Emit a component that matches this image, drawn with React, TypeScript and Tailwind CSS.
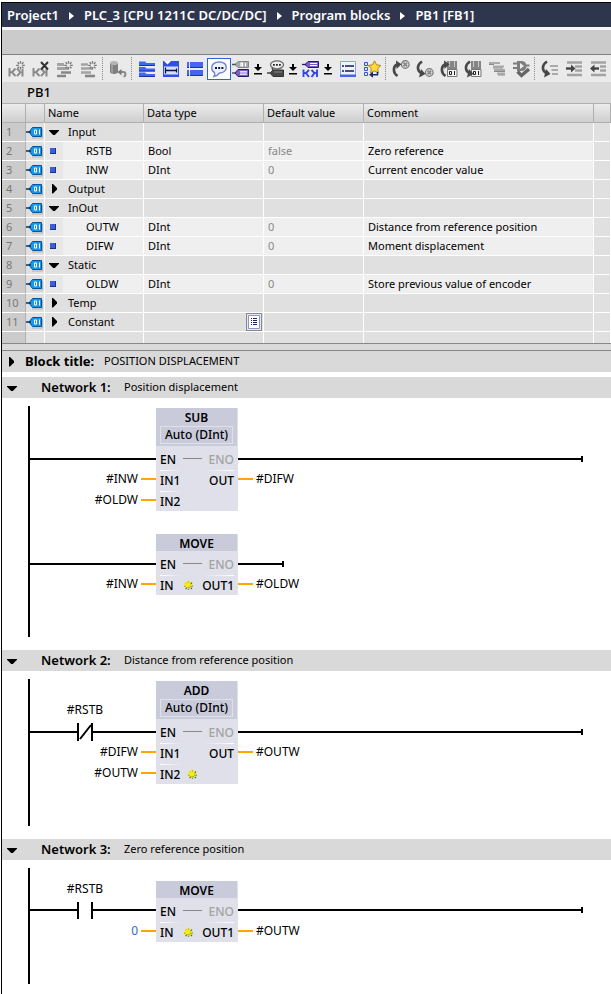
import type { ReactNode } from 'react'

// Block editor: breadcrumb, toolbar, interface table and the ladder networks.

type Row = {
  name: string
  kind: 'open' | 'closed' | 'variable'
  type?: string
  value?: string
  comment?: string
}

const ROWS: Row[] = [
  { name: 'Input', kind: 'open' },
  { name: 'RSTB', kind: 'variable', type: 'Bool', value: 'false', comment: 'Zero reference' },
  { name: 'INW', kind: 'variable', type: 'DInt', value: '0', comment: 'Current encoder value' },
  { name: 'Output', kind: 'closed' },
  { name: 'InOut', kind: 'open' },
  { name: 'OUTW', kind: 'variable', type: 'DInt', value: '0', comment: 'Distance from reference position' },
  { name: 'DIFW', kind: 'variable', type: 'DInt', value: '0', comment: 'Moment displacement' },
  { name: 'Static', kind: 'open' },
  { name: 'OLDW', kind: 'variable', type: 'DInt', value: '0', comment: 'Store previous value of encoder' },
  { name: 'Temp', kind: 'closed' },
  { name: 'Constant', kind: 'closed' },
]

const COLUMNS = ['', '', 'Name', 'Data type', 'Default value', 'Comment', '']

/* ---------- Icons ---------- */

function Icon({ children }: { children: ReactNode }) {
  return (
    <svg className="w-[18px] h-[18px] shrink-0" viewBox="0 0 18 18" fill="none" aria-hidden="true">
      {children}
    </svg>
  )
}

function Spark() {
  return (
    <g stroke="#777" strokeWidth="1.3">
      <path d="M12.5 1v2.6M12.5 7v2.6M8.2 5.3h2.6M14.2 5.3h2.6M9.5 2.3l1.7 1.7M15.5 2.3l-1.7 1.7M9.5 8.3l1.7-1.7M15.5 8.3l-1.7-1.7" />
    </g>
  )
}

function Contacts() {
  return <path d="M1.500 8v8.500M1.500 12.200h2.500M7.500 8.500L4 12.200l3.500 4M9 8.500l3.500 3.700L9 16.200M14.500 9v7.500" stroke="#8a8a8a" strokeWidth="2" />
}

const NetworkInsert = () => (
  <Icon>
    <Contacts />
    <Spark />
  </Icon>
)

const NetworkDelete = () => (
  <Icon>
    <Contacts />
    <path d="M9 2l7 7.5M16 2L9 9.5" stroke="#333" strokeWidth="2" />
  </Icon>
)

const RowInsert = () => (
  <Icon>
    <path d="M1 4.5h7M1 8.5h11" stroke="#a3a3a3" strokeWidth="3" />
    <path d="M5 12.5h10M1 16h9" stroke="#868686" strokeWidth="2.6" />
    <Spark />
  </Icon>
)

const RowAdd = () => (
  <Icon>
    <path d="M1 4.5h7M1 8.5h11M1 12.500h10" stroke="#a3a3a3" strokeWidth="2.6" />
    <path d="M5 16h10" stroke="#868686" strokeWidth="2.6" />
    <Spark />
  </Icon>
)

const ResetValues = () => (
  <Icon>
    <path d="M1 3v9c0 2.500 8 2.500 8 0V3z" fill="#808080" />
    <path d="M2 3h2v10H2z" fill="#9c9c9c" />
    <ellipse cx="5" cy="3" rx="4" ry="2" fill="#b5b5b5" />
    <path d="M11 12h3.500c2.500 0 2.500 4.500 0 4.500" stroke="#8a8a8a" strokeWidth="2" />
    <path d="M12.500 9v6.500L8.500 12z" fill="#777" />
  </Icon>
)

const OpenNetworks = () => (
  <Icon>
    <path d="M1 1.500h6L8.500 3H17v3H1zM1 7h6l1.500 1.500H17v3H1zM1 12.500h6L8.500 14H17v3H1z" fill="#3f68f0" />
    <path d="M1 5.500h16M1 11h16M1 16.500h16" stroke="#1e2fae" />
  </Icon>
)

const CloseNetworks = () => (
  <Icon>
    <path d="M1 1h16v16H1z" fill="#2f4fe0" />
    <path d="M2 6.500h14v8H2z" fill="#d5defb" />
    <path d="M2 1h7L5.500 4.500z" fill="#fff" />
    <path d="M3.500 7.500v6M14.500 8.500v4M3.500 10.500h11" stroke="#0d1240" strokeWidth="1.300" />
  </Icon>
)

const FreeComments = () => (
  <Icon>
    <path d="M1 2h16v6H1zM1 10h16v6H1z" fill="#4267ee" />
    <path d="M1 7.500h16M1 15.500h16" stroke="#1d30ad" />
    <path d="M3.500 2v14" stroke="#e6ebff" />
    <path d="M4 9h13" stroke="#e6ebff" strokeWidth="2" />
  </Icon>
)

const CommentBubble = () => (
  <Icon>
    <path d="M9 2c4.800 0 7.300 2 7.300 5.500S13 13 9.500 13c-1.500 2-3 3-5.500 3.500 1-1.500 1-2.500.500-4C2.500 11.500 1.700 10 1.700 7.700 1.700 4.500 4.500 2 9 2z" fill="#eef2ff" stroke="#7187cf" strokeWidth="1.400" />
    <path d="M5 7h2v2H5zM8.200 7h2v2h-2zM11.400 7h2v2h-2z" fill="#10164d" />
  </Icon>
)

const OperandTags = () => (
  <Icon>
    <path d="M6 1.500h10.500v6H6L3 4.500z" fill="#a8a8a8" stroke="#858585" />
    <path d="M9 3h1.500v3H9zM13.500 3v3.500" stroke="#fff" strokeWidth="1.200" />
    <path d="M0 4.500h4M0 13h4" stroke="#555" strokeWidth="1.300" />
    <path d="M6 9.500h10.500v7H6L3 13z" fill="#7d5cc4" stroke="#281a63" />
    <path d="M8 11.800h7M8 14.200h7" stroke="#fff" strokeWidth="1.200" />
  </Icon>
)

const OperandComment = () => (
  <Icon>
    <ellipse cx="10" cy="4.800" rx="6.500" ry="4" fill="#eee" stroke="#6b6b6b" strokeWidth="1.300" />
    <path d="M6 4h1.800v1.800H6zM9 4h1.800v1.800H9zM12 4h1.800v1.800H12z" fill="#222" />
    <path d="M6 10h10.500v6.500H6L3 13z" fill="#484848" stroke="#333" />
    <path d="M0 13h4M5 8l1 2.500" stroke="#444" strokeWidth="1.400" />
    <path d="M7 12h8" stroke="#888" />
  </Icon>
)

const OperandSwitch = () => (
  <Icon>
    <path d="M6 1.500h10.500v6H6L3 4.500z" fill="#7d5cc4" stroke="#281a63" />
    <path d="M8 3.500h7M8 5.500h7" stroke="#fff" />
    <path d="M0 4.500h4" stroke="#281a63" strokeWidth="1.300" />
    <path d="M1.500 9.500v7.500M1.500 13h2M7 10l-3 3 3 4M9.500 10l3 3-3 4M15 9.500v7.500M12 13h3" stroke="#3345e5" strokeWidth="1.900" />
  </Icon>
)

const NetworkView = () => (
  <Icon>
    <path d="M1.5 1.5h15v15h-15z" fill="#eff3ff" stroke="#8ea2e6" />
    <path d="M1 14.500h16V17H1z" fill="#4467dd" />
    <path d="M3 6h2M6 6h9M3 11h2M6 11h9" stroke="#111a55" strokeWidth="1.600" />
  </Icon>
)

const Favorites = () => (
  <Icon>
    <path d="M1.5 2.5h3v3h-3zM1.5 7.5h3v3h-3zM1.5 12.5h3v3h-3z" fill="#dfe6ff" stroke="#3655d3" />
    <path d="M11.500.8l2 4 4.300.700-3.100 3.100.7 4.300-3.900-2-3.900 2 .7-4.300L5.200 5.500l4.300-.7z" fill="#ffd83d" stroke="#b08414" />
    <path d="M14.500 12v2.800H8" stroke="#18276f" strokeWidth="1.500" />
    <path d="M10 11.800v6L6 14.800z" fill="#18276f" />
  </Icon>
)

function ArrowUpTurn() {
  return (
    <g>
      <path d="M5.5 16C.5 12.500 1 6.500 5 4.500" stroke="#484848" strokeWidth="2.600" />
      <path d="M4 .5l5.500 3.700L4.500 9z" fill="#484848" />
    </g>
  )
}

function ArrowDownTurn() {
  return (
    <g>
      <path d="M6 1.500C.5 5 1 10.500 5 13" stroke="#484848" strokeWidth="2.600" />
      <path d="M5 9l4.500 5L3 17.500z" fill="#484848" />
    </g>
  )
}

function ErrorMark({ y }: { y: number }) {
  return (
    <g>
      <circle cx="13.3" cy={y} r="3.800" fill="#ddd" stroke="#777" strokeWidth="1.200" />
      <path d={`M11.500 ${y - 1.8}l3.600 3.600M15.100 ${y - 1.8}l-3.600 3.600`} stroke="#888" strokeWidth="1.700" />
    </g>
  )
}

const PreviousError = () => (
  <Icon>
    <ArrowUpTurn />
    <ErrorMark y={4.5} />
  </Icon>
)

const NextError = () => (
  <Icon>
    <ArrowDownTurn />
    <ErrorMark y={12.5} />
  </Icon>
)

function DataBlock() {
  return (
    <g>
      <path d="M7 1h10v8H7z" fill="#858585" />
      <path d="M9.500 1v6M14.500 1v6" stroke="#c8c8c8" />
      <path d="M7.5 9.500h9.500v7H7.500z" fill="#f2f2f2" stroke="#777" />
      <path d="M9.500 11.500h2v3h-2zM14.500 11v4" stroke="#222" />
    </g>
  )
}

const PreviousUse = () => (
  <Icon>
    <DataBlock />
    <ArrowUpTurn />
  </Icon>
)

const NextUse = () => (
  <Icon>
    <DataBlock />
    <ArrowDownTurn />
  </Icon>
)

const UpdateCalls = () => (
  <Icon>
    <path d="M1 3h11M5 6.500h11M6 10h11M9 13.500h8" stroke="#aaa" strokeWidth="2.200" />
    <path d="M1 4.500h5M5 8h10M6 11.500h11M10 15h7" stroke="#888" />
  </Icon>
)

const CheckBlock = () => (
  <Icon>
    <path d="M5 1h5c6 0 6 10 0 10H5z" fill="#7d7d7d" />
    <path d="M8 3l4 3-4 3z" fill="#eee" />
    <path d="M1 3.500h4M1 8h4M14 5.500h3.500" stroke="#7d7d7d" strokeWidth="2" />
    <path d="M5.500 11.500l4 4L17 9" stroke="#666" strokeWidth="3.400" />
  </Icon>
)

const JumpTo = () => (
  <Icon>
    <ArrowDownTurn />
    <path d="M9 6h8M10.500 10h6.500M11 14h6" stroke="#aaa" strokeWidth="2.200" />
  </Icon>
)

const Indent = () => (
  <Icon>
    <path d="M2 2.500h15M10 6.500h7M10 10.500h7M2 15h15" stroke="#a3a3a3" strokeWidth="2.600" />
    <path d="M1 8.500h6" stroke="#444" strokeWidth="2.400" />
    <path d="M6 4.500l4.500 4L6 12.500z" fill="#444" />
  </Icon>
)

const Outdent = () => (
  <Icon>
    <path d="M2 2.500h15M11 6.500h6M11 10.500h6M2 15h15" stroke="#a3a3a3" strokeWidth="2.600" />
    <path d="M4 8.500h6" stroke="#444" strokeWidth="2.400" />
    <path d="M5.500 4.500l-4.500 4 4.500 4z" fill="#444" />
  </Icon>
)

function TagIcon() {
  return (
    <svg className="w-[17px] h-[13px] block" viewBox="0 0 17 13" fill="none" aria-hidden="true">
      <path d="M6 12h10.500V3" stroke="#b0b0b0" />
      <path d="M6.5 1.500h9v9h-9L3 6z" fill="#1399ee" stroke="#07539b" />
      <path d="M0 6h5" stroke="#07335f" strokeWidth="1.500" />
      <path d="M8.500 4h2v4h-2zM13.500 3.500v5" stroke="#fff" />
    </svg>
  )
}

function Triangle({ open }: { open: boolean }) {
  return (
    <svg className="w-[10px] h-[10px] block shrink-0" viewBox="0 0 10 10" aria-hidden="true">
      <path d={open ? 'M0 3h10v.800L5.800 8H4.200L0 3.800z' : 'M3 0h1l4 4v1.500L4 9.500H3z'} fill="#000" />
    </svg>
  )
}

/* ---------- Toolbar ---------- */

function ToolButton({ label, active, children }: { label: string; active?: boolean; children: ReactNode }) {
  return (
    <button
      type="button"
      aria-label={label}
      className={`w-6 h-[22px] shrink-0 flex items-center justify-center border ${
        active ? 'border-[#2c64d2] bg-white' : 'border-transparent'
      }`}
    >
      {children}
    </button>
  )
}

function ToolMenu({ label, children }: { label: string; children: ReactNode }) {
  return (
    <button type="button" aria-label={label} className="w-[35px] h-[22px] shrink-0 flex items-center gap-1 pl-px">
      {children}
      <svg className="w-2 h-3 shrink-0" viewBox="0 0 8 12" aria-hidden="true">
        <path d="M3 1h2v3h3L4 8 0 4h3zM0 10h8v1.5H0z" fill="#000" />
      </svg>
    </button>
  )
}

function Separator() {
  return (
    <span className="w-[5px] h-[23px] shrink-0 flex">
      <span className="ml-px border-l border-dotted border-[#888]" />
    </span>
  )
}

function Toolbar() {
  return (
    <div role="toolbar" className="flex items-center h-[27px] pl-[3px] bg-[#eaeaea] overflow-hidden">
      <ToolButton label="Insert network"><NetworkInsert /></ToolButton>
      <ToolButton label="Delete network"><NetworkDelete /></ToolButton>
      <ToolButton label="Insert row"><RowInsert /></ToolButton>
      <ToolButton label="Add row"><RowAdd /></ToolButton>
      <Separator />
      <ToolButton label="Reset start values"><ResetValues /></ToolButton>
      <Separator />
      <ToolButton label="Open all networks"><OpenNetworks /></ToolButton>
      <ToolButton label="Close all networks"><CloseNetworks /></ToolButton>
      <ToolButton label="Free-form comments"><FreeComments /></ToolButton>
      <ToolButton label="Network comments" active><CommentBubble /></ToolButton>
      <ToolMenu label="Absolute or symbolic operands"><OperandTags /></ToolMenu>
      <ToolMenu label="Operand comments"><OperandComment /></ToolMenu>
      <ToolMenu label="Operand display"><OperandSwitch /></ToolMenu>
      <ToolButton label="Network view"><NetworkView /></ToolButton>
      <ToolButton label="Favorites"><Favorites /></ToolButton>
      <Separator />
      <ToolButton label="Previous error"><PreviousError /></ToolButton>
      <ToolButton label="Next error"><NextError /></ToolButton>
      <ToolButton label="Previous use"><PreviousUse /></ToolButton>
      <ToolButton label="Next use"><NextUse /></ToolButton>
      <ToolButton label="Update block calls"><UpdateCalls /></ToolButton>
      <ToolButton label="Check block"><CheckBlock /></ToolButton>
      <Separator />
      <ToolButton label="Jump to line"><JumpTo /></ToolButton>
      <ToolButton label="Indent"><Indent /></ToolButton>
      <ToolButton label="Outdent"><Outdent /></ToolButton>
    </div>
  )
}

/* ---------- Interface table ---------- */

function NameCell({ row }: { row: Row }) {
  if (row.kind === 'variable') {
    return (
      <div className="flex h-[18px]">
        <span className="w-[18px] bg-[#e7e7e7] flex items-center pl-[5px]">
          <span className="w-[6px] h-[6px] bg-[#3a5fd9] border-b border-r border-[#1c2f8f]" />
        </span>
        <span className="pl-[23px]">{row.name}</span>
      </div>
    )
  }
  return (
    <div className="flex items-center h-[18px] pl-1 gap-[9px]">
      <button type="button" aria-label={row.name} aria-expanded={row.kind === 'open'}>
        <Triangle open={row.kind === 'open'} />
      </button>
      <span>{row.name}</span>
    </div>
  )
}

function InterfaceTable() {
  const cell = 'p-0 border-b border-r border-white whitespace-nowrap'

  return (
    <table className="w-full table-fixed border-separate border-spacing-0 text-left text-[11px] leading-[18px]">
      <colgroup>
        <col className="w-6" />
        <col className="w-[19px]" />
        <col className="w-[99px]" />
        <col className="w-[120px]" />
        <col className="w-[100px]" />
        <col className="w-[230px]" />
        <col />
      </colgroup>
      <thead>
        <tr className="h-5">
          {COLUMNS.map((title, i) => (
            <th
              key={i}
              scope="col"
              className="p-0 pl-[3px] font-normal whitespace-nowrap border-t border-b border-r border-[#b0b0b0] bg-linear-to-b from-[#ececec] to-[#cfcfcf]"
            >
              {title}
            </th>
          ))}
        </tr>
      </thead>
      <tbody>
        {ROWS.map((row, i) => {
          const fill = row.kind === 'variable' ? 'bg-[#efefef]' : 'bg-[#e0e0e0]'
          return (
            <tr key={row.name} className="h-[19px]">
              <td className="p-0 pl-1 border-b border-b-white border-r border-r-[#b0b0b0] bg-[#cbcbcb] text-[#777]">{i + 1}</td>
              <td className={`${cell} bg-[#e0e0e0]`}><TagIcon /></td>
              <td className={`${cell} ${fill}`}><NameCell row={row} /></td>
              <td className={`${cell} ${fill} pl-1`}>
                {row.name === 'Constant' ? (
                  <button
                    type="button"
                    aria-label="Choose data type"
                    className="w-4 h-[18px] ml-auto mr-px flex items-center justify-center bg-[#e9e9e9] border border-[#888]"
                  >
                    <svg className="w-3 h-[14px] shrink-0" viewBox="0 0 12 14" fill="none" aria-hidden="true">
                      <path d="M.5.5h11v13H.500z" fill="#fff" stroke="#8b94cc" />
                      <path d="M3 3.500h1M5 3.500h4M3 5.500h1M5 5.500h4M3 7.500h1M5 7.500h4M3 9.500h1M5 9.500h4" stroke="#1d245f" />
                    </svg>
                  </button>
                ) : (
                  row.type
                )}
              </td>
              <td className={`${cell} ${fill} pl-1 text-[#888]`}>{row.value}</td>
              <td className={`${cell} ${fill} pl-1`}>{row.comment}</td>
              <td className={`${cell} bg-[#e0e0e0]`} />
            </tr>
          )
        })}
        <tr className="h-[11px]">
          {COLUMNS.map((_, i) => (
            <td key={i} className={`p-0 border-r ${i === 0 ? 'bg-[#cbcbcb] border-[#b0b0b0]' : 'bg-[#e0e0e0] border-white'}`} />
          ))}
        </tr>
      </tbody>
    </table>
  )
}

/* ---------- Ladder networks ---------- */

type Pin = { left: string; right?: string; input?: string; output?: string; constant?: boolean; star?: boolean }

function Star() {
  return (
    <svg className="w-[11px] h-[11px] shrink-0" viewBox="0 0 11 11" fill="none" aria-hidden="true">
      <path d="M5.5 1v9M1 6h9M2.500 2.500l6.500 6.500M9 2.500L2.500 9" stroke="#3d6b66" strokeWidth="1.200" />
      <path d="M5 .5v9M.5 5h9M2 2l6 6M8 2L2 8" stroke="#ffee00" strokeWidth="1.400" />
    </svg>
  )
}

function Block({ title, subtitle, pins, className }: { title: string; subtitle?: string; pins: Pin[]; className: string }) {
  return (
    <div className={`absolute left-[154px] w-[82px] bg-[#dfe0e9] text-xs font-medium ${className}`}>
      <div className={`mr-px bg-[#c9cbdb] text-center ${subtitle ? 'h-[38px]' : 'h-[17px]'}`}>
        <div className="leading-5 h-[18px] font-semibold">{title}</div>
        {subtitle && <div className="mx-1 h-[18px] leading-4 border border-[#dfe0e9] whitespace-nowrap">{subtitle}</div>}
      </div>
      <div className="pt-1">
        <div className="flex items-center h-5 px-1 gap-[7px]">
          <span className="min-w-4">EN</span>
          <span className="w-[19px] h-px mb-[3px] bg-[#888]" />
          <span className="ml-auto text-[#a3a3a3]">ENO</span>
        </div>
        {pins.map((pin, i) => (
          <div key={pin.left} className={`relative px-1 ${i === pins.length - 1 ? 'h-5' : 'h-[21px]'}`}>
            <div className="flex justify-between h-px">
              <span className="w-[22px] bg-linear-to-r from-white to-transparent" />
              {i === 0 && <span className="w-8 bg-linear-to-r from-transparent to-white" />}
            </div>
            <div className="flex items-center h-[19px] gap-[7px]">
              <span className="min-w-4">{pin.left}</span>
              {pin.star && <Star />}
              {pin.right && <span className="ml-auto">{pin.right}</span>}
            </div>
            {pin.input && (
              <div className="absolute right-full top-0 flex items-center gap-[3px] h-[18px] font-normal">
                <span className={pin.constant ? 'text-[#3a68c8]' : ''}>{pin.input}</span>
                <span className="w-[15px] h-[2px] bg-[#ffa500]" />
              </div>
            )}
            {pin.output && (
              <div className="absolute left-full top-0 flex items-center gap-[3px] h-[18px] font-normal">
                <span className="w-[15px] h-[2px] bg-[#ffa500]" />
                <span>{pin.output}</span>
              </div>
            )}
          </div>
        ))}
      </div>
    </div>
  )
}

function Wires({ d }: { d: string }) {
  return (
    <svg className="absolute inset-0 w-full h-full" fill="none" aria-hidden="true">
      <path d={d} stroke="#000" strokeWidth="2" />
    </svg>
  )
}

function ContactLabel({ className, children }: { className: string; children: ReactNode }) {
  return <span className={`absolute left-[43px] w-20 text-center leading-4 text-xs ${className}`}>{children}</span>
}

function Network({ title, comment, className, children }: { title: string; comment: string; className: string; children: ReactNode }) {
  return (
    <section>
      <header className="flex items-center h-[21px] bg-[#d9d9d9] pl-[5px]">
        <button type="button" aria-label={title} aria-expanded="true" className="w-[34px]">
          <Triangle open />
        </button>
        <h2 className="w-[83px] text-[13px] font-semibold whitespace-nowrap">{title}</h2>
        <p className="text-[11px] whitespace-nowrap">{comment}</p>
      </header>
      <div className={`relative ${className}`}>{children}</div>
    </section>
  )
}

export default function App() {
  const crumbs = ['Project1', 'PLC_3 [CPU 1211C DC/DC/DC]', 'Program blocks', 'PB1 [FB1]']

  return (
    <main className="min-h-screen bg-white pt-[2px] pl-px overflow-hidden font-['Noto_Sans','Open_Sans',sans-serif] text-black">
      <div className="min-h-[992px] border-l border-t border-black">
        <nav aria-label="Path" className="flex items-center h-6 pt-px pl-[5px] bg-[#2e364e] text-white text-[13px] font-semibold whitespace-nowrap">
          {crumbs.map((crumb, i) => (
            <span key={crumb} className="flex items-center">
              {i > 0 && (
                <svg className="w-[5px] h-[8px] mx-[10px]" viewBox="0 0 5 8" aria-hidden="true">
                  <path d="M0 0l5 4-5 4z" fill="#fff" />
                </svg>
              )}
              <a href="#">{crumb}</a>
            </span>
          ))}
        </nav>
        <div className="h-7 border-t-[3px] border-t-[#f5f5f5] border-b border-b-[#808080] bg-[#cbcbcb]" />
        <Toolbar />
        <h1 className="h-[21px] pl-[25px] bg-[#d9d9d9] text-[13px] leading-[21px] font-medium">PB1</h1>

        <InterfaceTable />
        <div className="h-2 border-y border-[#888] bg-[#dadada]" />

        <div className="flex items-center h-[21px] mb-[5px] pl-1 bg-[#d9d9d9]">
          <button type="button" aria-label="Block title" aria-expanded="false" className="w-[19px]">
            <Triangle open={false} />
          </button>
          <h2 className="w-[79px] text-[13px] font-bold whitespace-nowrap">Block title:</h2>
          <p className="text-[11px] whitespace-nowrap">POSITION DISPLACEMENT</p>
        </div>

        <Network title="Network 1:" comment="Position displacement" className="h-[252px]">
          <Wires d="M27 8V239M27 61H154M236 61H580M580 58V64M27 166H154M236 166H281M281 163V169" />
          <Block
            title="SUB"
            subtitle="Auto (DInt)"
            className="top-[10px]"
            pins={[
              { left: 'IN1', right: 'OUT', input: '#INW', output: '#DIFW' },
              { left: 'IN2', input: '#OLDW' },
            ]}
          />
          <Block
            title="MOVE"
            className="top-[136px]"
            pins={[{ left: 'IN', right: 'OUT1', input: '#INW', output: '#OLDW', star: true }]}
          />
        </Network>

        <Network title="Network 2:" comment="Distance from reference position" className="h-[168px]">
          <Wires d="M27 8V155M27 61H76M76 52V70M78 68L89 54M90 52V70M90 61H154M236 61H580M580 58V64" />
          <ContactLabel className="top-[31px]">#RSTB</ContactLabel>
          <Block
            title="ADD"
            subtitle="Auto (DInt)"
            className="top-[10px]"
            pins={[
              { left: 'IN1', right: 'OUT', input: '#DIFW', output: '#OUTW' },
              { left: 'IN2', input: '#OUTW', star: true },
            ]}
          />
        </Network>

        <Network title="Network 3:" comment="Zero reference position" className="h-[134px]">
          <Wires d="M27 8V124M27 50H76M76 42V59M90 42V59M90 50H154M236 50H580M580 47V53" />
          <ContactLabel className="top-[21px]">#RSTB</ContactLabel>
          <Block
            title="MOVE"
            className="top-[21px]"
            pins={[{ left: 'IN', right: 'OUT1', input: '0', output: '#OUTW', constant: true, star: true }]}
          />
        </Network>
      </div>
    </main>
  )
}
